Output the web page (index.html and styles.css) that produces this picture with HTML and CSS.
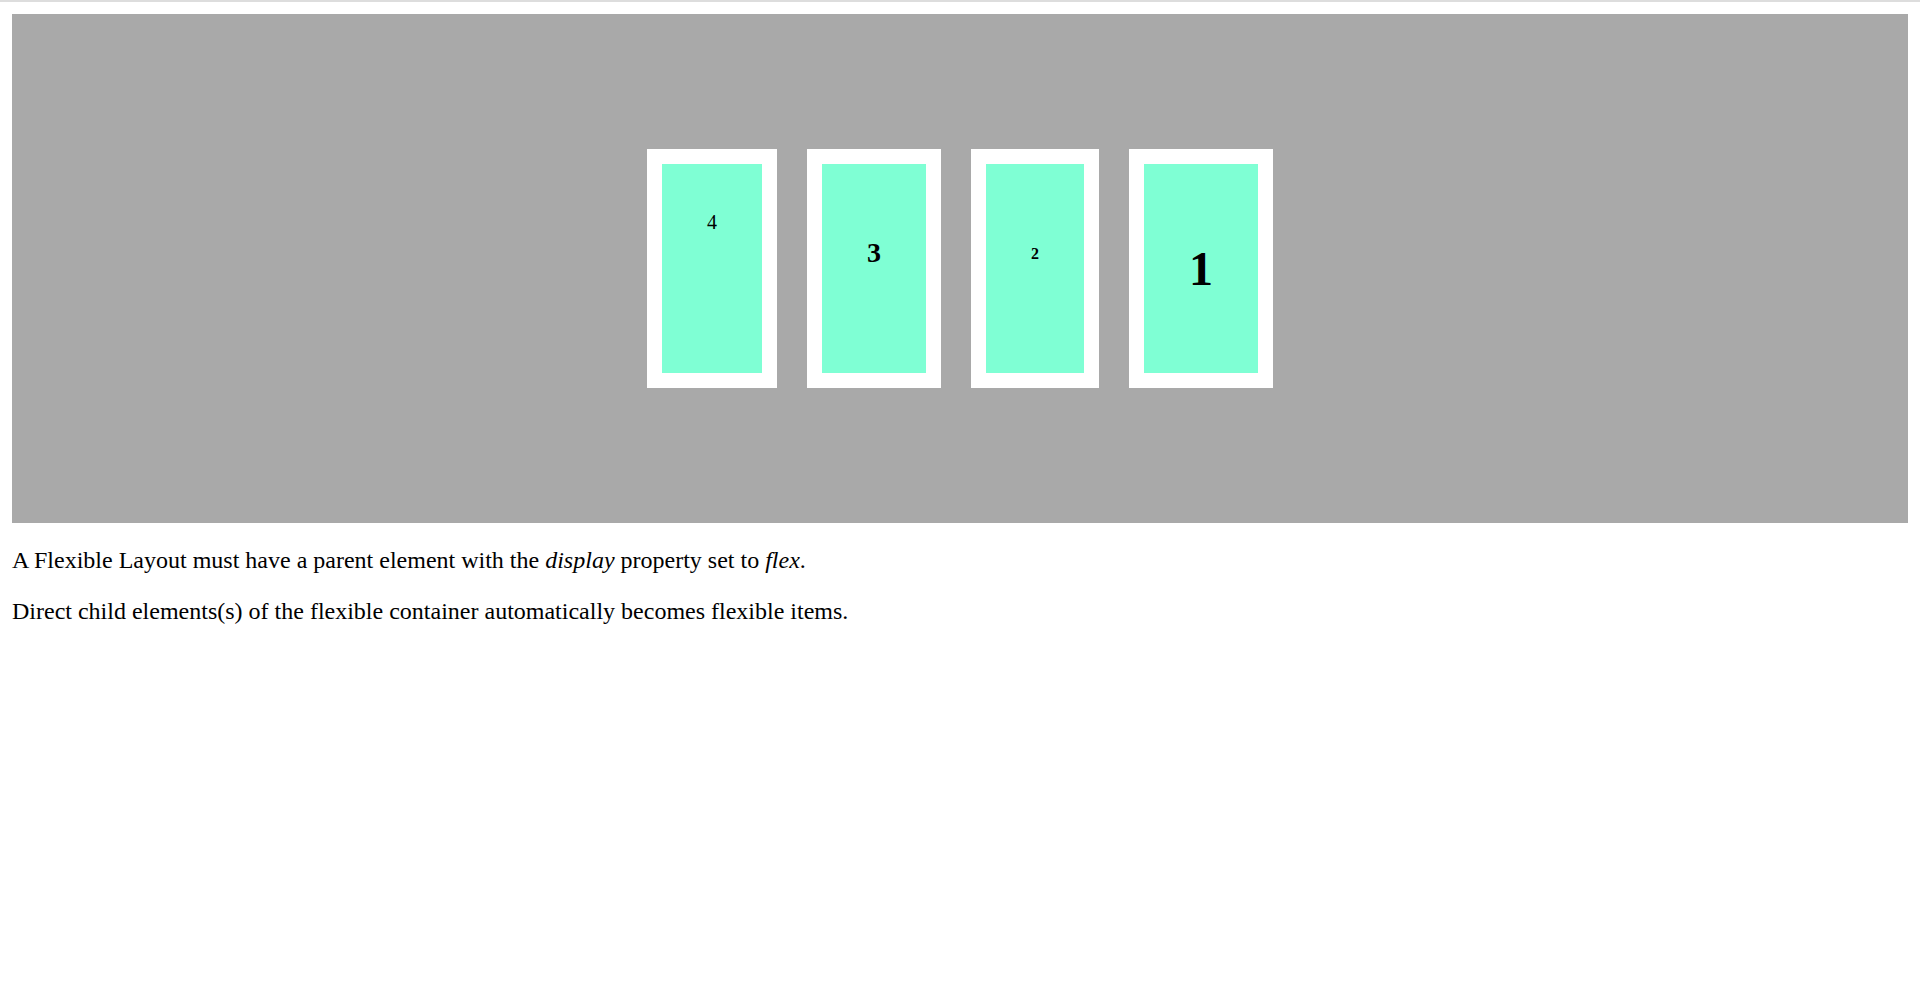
FILE: index.html
```html
<!DOCTYPE html>
<html>
<head>
<meta charset="utf-8">
<title>Flexible Layout</title>
<link rel="stylesheet" href="styles.css">
</head>
<body>
<div class="topbar"></div>
<div class="page">
  <div class="flex-container">
    <div class="item"><div class="num num-4">4</div></div>
    <div class="item"><div class="num num-3">3</div></div>
    <div class="item"><div class="num num-2">2</div></div>
    <div class="item"><div class="num num-1">1</div></div>
  </div>
  <p class="note">A Flexible Layout must have a parent element with the <em>display</em> property set to <em>flex</em>.</p>
  <p class="note">Direct child elements(s) of the flexible container automatically becomes flexible items.</p>
</div>
</body>
</html>
```
FILE: styles.css
```css
html, body {
  margin: 0;
  padding: 0;
  background: #ffffff;
}

body {
  font-family: "Liberation Serif", "Times New Roman", serif;
  color: #000000;
}

.topbar {
  height: 2px;
  background: #dddddd;
}

.page {
  padding: 12px;
}

.flex-container {
  display: flex;
  justify-content: center;
  align-items: center;
  gap: 30px;
  height: 509px;
  background: #a9a9a9;
}

.item {
  background: #7fffd4;
  border: 15px solid #ffffff;
  padding: 0 45px;
  height: 209px;
  text-align: center;
}

.num {
  line-height: normal;
}

.num-4 {
  font-size: 20px;
  font-weight: normal;
  margin-top: 47px;
}

.num-3 {
  font-size: 28px;
  font-weight: bold;
  margin-top: 73px;
}

.num-2 {
  font-size: 16px;
  font-weight: bold;
  margin-top: 81px;
}

.num-1 {
  font-size: 48px;
  font-weight: bold;
  margin-top: 77px;
}

.note {
  font-size: 24px;
  margin: 24px 0;
}
```
